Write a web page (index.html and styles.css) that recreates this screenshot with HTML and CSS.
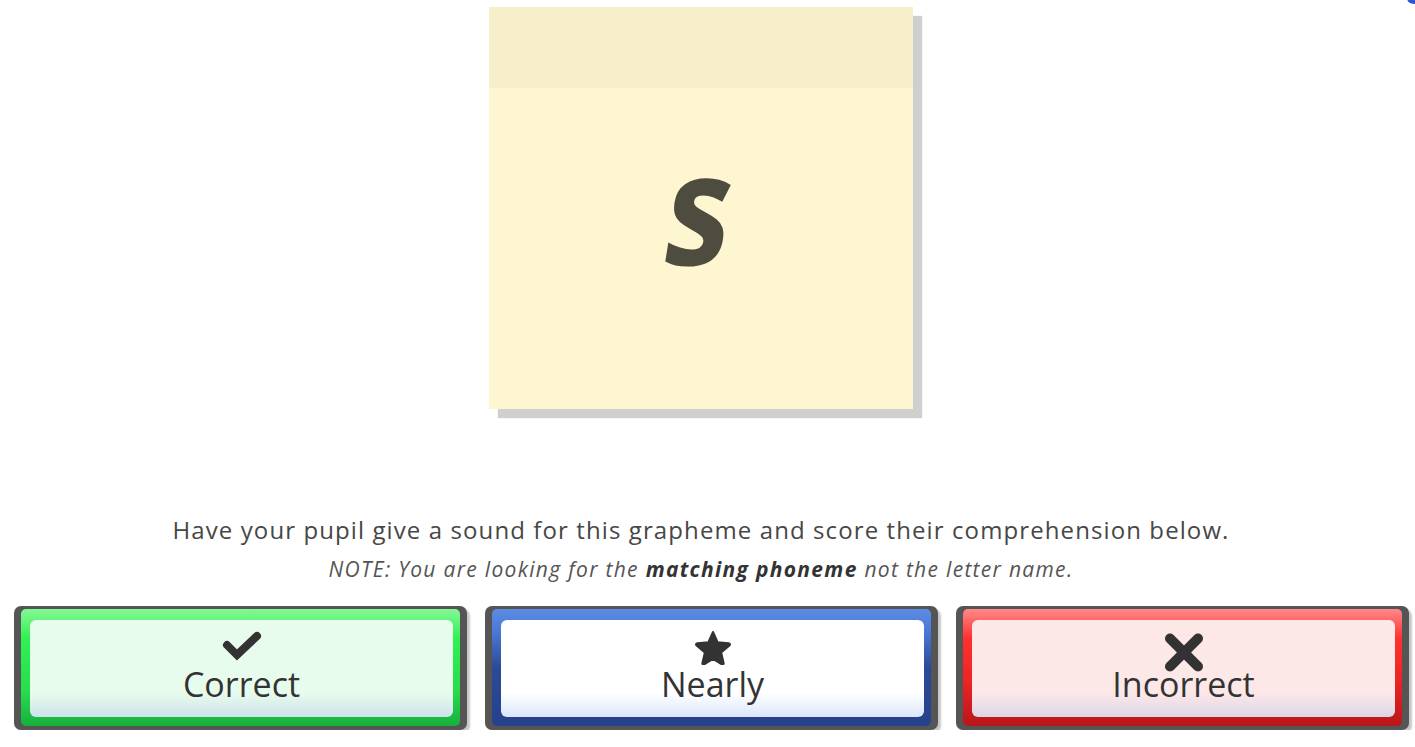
FILE: index.html
```html
<!DOCTYPE html>
<html>
  <head>
    <title>Grapheme Check</title>
    <link rel="stylesheet" href="styles.css">
  </head>
  <body>
    <div class="corner-dot"></div>
    <div class="page">
      <div class="note-card">
        <div class="note-top"></div>
        <div class="note-body"><span class="grapheme">s</span></div>
      </div>

      <p class="prompt">Have your pupil give a sound for this grapheme and score their comprehension below.</p>
      <p class="hint">NOTE: You are looking for the <b>matching phoneme</b> not the letter name.</p>

      <div class="score-row">
        <button class="score-btn correct">
          <span class="frame">
            <span class="face">
              <span class="icon-box">
                <svg class="icon check" width="40" height="30" viewBox="0 0 40 30">
                  <polyline points="5,14 15,24 35,5" fill="none" stroke="#333" stroke-width="8" stroke-linecap="round" stroke-linejoin="miter"/>
                </svg>
              </span>
              <span class="label">Correct</span>
            </span>
          </span>
        </button>
        <button class="score-btn nearly">
          <span class="frame">
            <span class="face">
              <span class="icon-box">
                <svg class="icon star" width="38" height="35" viewBox="0 0 38 35">
                  <path d="M19 2 L23.6 12.2 L34.6 13.2 C36 13.4 36.4 14.6 35.4 15.5 L27.2 22.6 L29.6 33 C29.9 34.3 28.8 35 27.7 34.3 L19 28.8 L10.3 34.3 C9.2 35 8.1 34.3 8.4 33 L10.8 22.6 L2.6 15.5 C1.6 14.6 2 13.4 3.4 13.2 L14.4 12.2 Z" fill="#333" stroke="#333" stroke-width="2" stroke-linejoin="round"/>
                </svg>
              </span>
              <span class="label">Nearly</span>
            </span>
          </span>
        </button>
        <button class="score-btn incorrect">
          <span class="frame">
            <span class="face">
              <span class="icon-box">
                <svg class="icon cross" width="40" height="39" viewBox="0 0 40 39">
                  <line x1="6" y1="5.5" x2="34" y2="33.5" stroke="#333" stroke-width="10" stroke-linecap="round"/>
                  <line x1="34" y1="5.5" x2="6" y2="33.5" stroke="#333" stroke-width="10" stroke-linecap="round"/>
                </svg>
              </span>
              <span class="label">Incorrect</span>
            </span>
          </span>
        </button>
      </div>
    </div>
  </body>
</html>
```

FILE: styles.css
```css
body { margin: 0; background: #fff; font-family: "Open Sans", Lato, sans-serif; overflow: hidden; }

.corner-dot { position: absolute; top: -8px; right: -6px; width: 14px; height: 12px; border-radius: 50%; background: #2b57d8; }

.page { width: 1402px; padding-top: 7px; }

.note-card { width: 424px; height: 402px; margin: 0 auto; display: flex; flex-direction: column; background: #fef5d1; box-shadow: 9px 9px 1px #cfcfcf; }
.note-top { height: 81px; background: #f7efca; }
.note-body { flex: 1; display: flex; justify-content: center; padding-top: 32px; }
.grapheme { display: block; height: 170px; font-family: "Open Sans", sans-serif; font-weight: 700; font-size: 156px; line-height: 170px; color: #4e4b3f; transform: skewX(-9deg) scaleX(0.84); }

.prompt { margin: 105px 0 0; text-align: center; font-size: 24px; line-height: 32px; letter-spacing: 1.1px; color: #474747; }
.hint { margin: 10px 0 0; text-align: center; font-size: 21px; line-height: 26px; letter-spacing: 1.3px; font-style: italic; color: #555; }
.hint b { color: #333; }

.score-row { display: flex; gap: 18px; padding: 24px 0 0 14px; }

.score-btn { flex: 0 0 453px; height: 124px; padding: 3px 7px 4px 7px; border: none; border-radius: 7px; background: #555; box-shadow: 3px 3px 2px rgba(0, 0, 0, 0.22); font: inherit; cursor: pointer; box-sizing: border-box; display: flex; }
.score-btn .frame { flex: 1; display: flex; border-radius: 5px; padding: 11px 7px 9px 9px; }
.score-btn .face { flex: 1; display: flex; flex-direction: column; align-items: center; border-radius: 6px; padding-top: 11px; box-sizing: border-box; }
.score-btn .icon-box { height: 34px; display: flex; align-items: flex-start; justify-content: center; }
.score-btn .icon { display: block; flex-shrink: 0; }
.score-btn .check { margin-top: 0; }
.score-btn .star { margin-top: -1px; }
.score-btn .cross { margin-top: 2px; }
.score-btn .label { position: relative; font-family: "Open Sans", sans-serif; font-size: 34px; line-height: 38px; color: #333; }

.correct .frame { background: linear-gradient(#86f796 0%, #2ff252 25%, #27dd4c 70%, #17b03c 100%); }
.correct .face { background: linear-gradient(#e8fced 0%, #e8fced 75%, #cde2ec 100%); }

.nearly .frame { background: linear-gradient(#5d8ce4 0%, #4a78d6 20%, #2c4a96 50%, #27418b 100%); }
.nearly .face { background: linear-gradient(#fff 0%, #fff 75%, #dbe6fb 100%); }

.incorrect .frame { background: linear-gradient(#ff8a8a 0%, #ff3030 25%, #ee2525 60%, #b8161a 100%); }
.incorrect .face { background: linear-gradient(#fde8e8 0%, #fde8e8 75%, #dcd6e8 100%); }
```
